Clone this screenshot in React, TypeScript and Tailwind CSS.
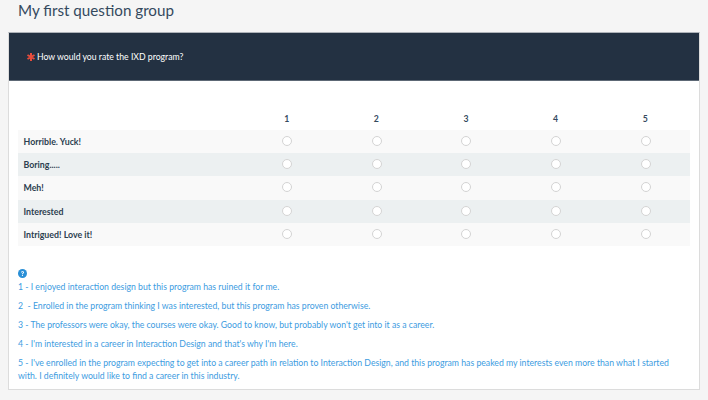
const answers = ["Horrible. Yuck!", "Boring.....", "Meh!", "Interested", "Intrigued! Love it!"];
const columns = [1, 2, 3, 4, 5];

function Radio() {
  return (
    <div className="flex justify-center pl-[1px]">
      <span className="block w-[8px] h-[8px] rounded-full bg-white border border-[#d4d4d4] box-content -mt-[1px]" />
    </div>
  );
}

export default function App() {
  return (
    <div className="h-[400px] overflow-hidden bg-[#f5f5f5] font-['Lato',sans-serif] text-[#34495e]">
      <h1 className="pl-[18px] h-[32px] text-[15.2px] leading-[20px] font-normal">My first question group</h1>

      <div className="mx-[8px] w-[692px] h-[358px] bg-white border border-[#dcdcdc] border-t-[#aeb3b9]">
        <div className="h-[48px] bg-[#233142] border-b border-[#5d6875] flex items-center pl-[18px] text-white text-[8.7px]">
          <svg className="w-[8px] h-[8px] mr-[2px]" viewBox="0 0 16 16" stroke="#e74c3c" strokeWidth="4">
            <path d="M8 0v16M1 4l14 8M15 4L1 12" />
          </svg>
          <span>How would you rate the IXD program?</span>
        </div>

        <div className="mx-[9px] mt-[28px]">
          <div className="grid grid-cols-[224px_repeat(5,89.6px)] h-[21px] items-center text-[8.7px] font-bold pb-[2px]">
            <div />
            {columns.map((c) => (
              <div key={c} className="text-center">
                {c}
              </div>
            ))}
          </div>
          {answers.map((a, i) => (
            <div
              key={a}
              className={`grid grid-cols-[224px_repeat(5,89.6px)] h-[23.2px] items-center ${i % 2 ? "bg-[#ecf0f1]" : "bg-[#f9f9f9]"}`}
            >
              <div className="pl-[5.5px] text-[8.8px] font-bold text-[#2c3e50]">{a}</div>
              {columns.map((c) => (
                <Radio key={c} />
              ))}
            </div>
          ))}
        </div>

        <div className="mx-[9px] mt-[23px] max-w-[660px] text-[#3d9cdf] text-[8.7px]">
          <svg className="w-[9px] h-[9px] mb-[2px]" viewBox="0 0 16 16">
            <circle cx="8" cy="8" r="8" fill="#2a8fd6" />
            <path d="M5.4 6.2c0-1.5 1.2-2.4 2.7-2.4s2.6.9 2.6 2.2c0 1.1-.6 1.6-1.4 2.1-.6.4-.8.6-.8 1.2H7c0-1.2.4-1.7 1.2-2.2.5-.3.8-.5.8-1 0-.5-.4-.8-1-.8-.6 0-1 .4-1 1z" fill="#fff" />
            <rect x="7" y="10.4" width="1.9" height="1.9" fill="#fff" />
          </svg>
          <p className="leading-[13px] mb-[6px]">1 - I enjoyed interaction design but this program has ruined it for me.</p>
          <p className="leading-[13px] mb-[6px] whitespace-pre">2  - Enrolled in the program thinking I was interested, but this program has proven otherwise.</p>
          <p className="leading-[13px] mb-[6px]">3 - The professors were okay, the courses were okay. Good to know, but probably won't get into it as a career.</p>
          <p className="leading-[13px] mb-[6px]">4 - I'm interested in a career in Interaction Design and that's why I'm here.</p>
          <p className="leading-[13px]">
            5 - I've enrolled in the program expecting to get into a career path in relation to Interaction Design, and this program has peaked my interests even more than what I started with. I definitely would like to find a career in this industry.
          </p>
        </div>
      </div>
    </div>
  );
}
